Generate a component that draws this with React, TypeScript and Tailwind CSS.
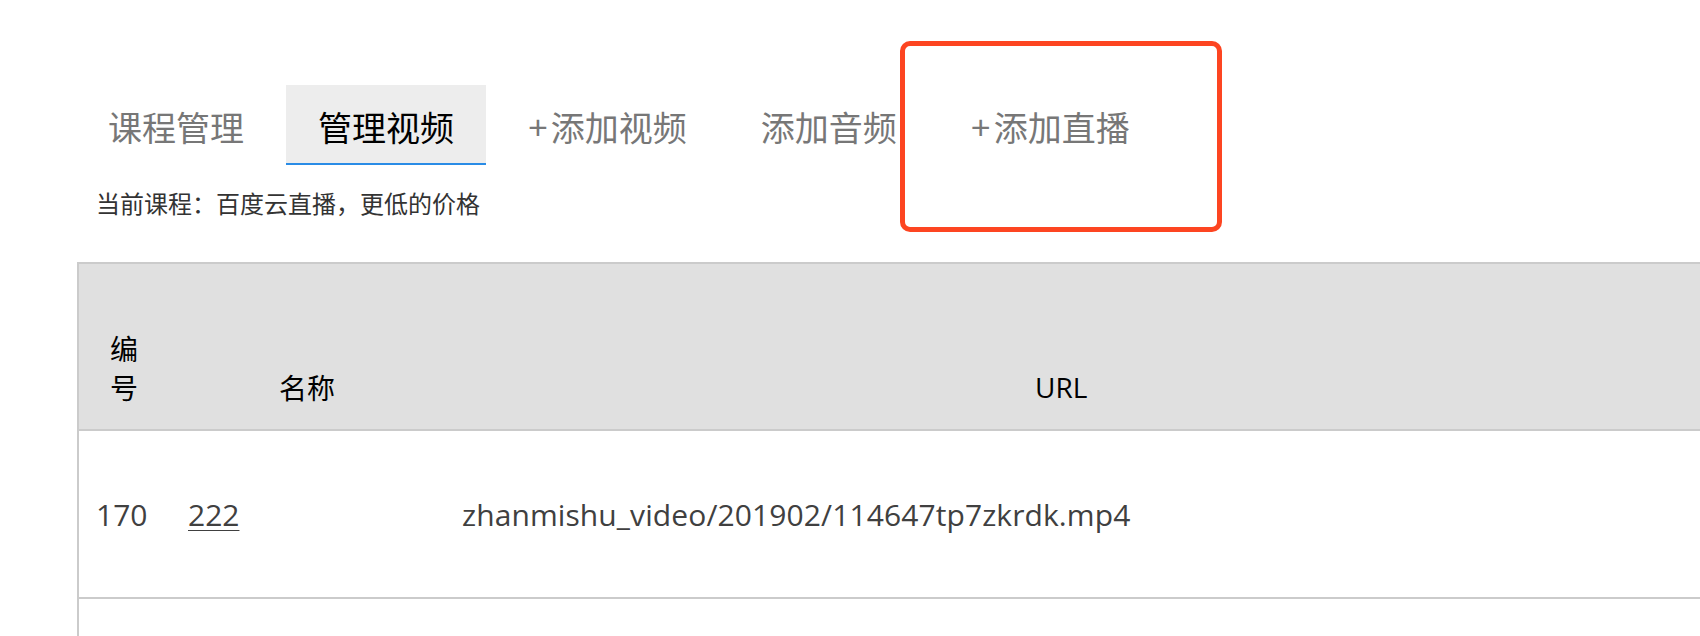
const cjk = "font-['PingFang_SC','Noto_Sans_CJK_SC',sans-serif]";

const tabs = [
  { label: "课程管理", plus: false, active: false },
  { label: "管理视频", plus: false, active: true },
  { label: "添加视频", plus: true, active: false },
  { label: "添加音频", plus: false, active: false },
  { label: "添加直播", plus: true, active: false },
];

export default function App() {
  return (
    <div className="relative h-[636px] w-[1700px] overflow-hidden bg-white">
      {/* tabs */}
      <div className={`flex gap-[10px] pl-[76px] pt-[85px] text-[34px] ${cjk}`}>
        {tabs.map((t) => (
          <div
            key={t.label}
            className={
              t.active
                ? "flex h-[80px] items-center border-b-2 border-[#2a8ce6] bg-[#ededed] px-[32px] pt-[6px] leading-none text-black"
                : "flex h-[80px] items-center border-b-2 border-transparent px-[32px] pt-[6px] leading-none text-[#777]"
            }
          >
            {t.plus && <span className="mr-[3px] font-['Liberation_Sans',sans-serif]">+</span>}
            {t.label}
          </div>
        ))}
      </div>

      <p className={`ml-[96px] mt-[20px] text-[24px] leading-[36px] text-[#333] ${cjk}`}>
        当前课程：百度云直播，更低的价格
      </p>

      {/* table */}
      <div className="ml-[77px] mt-[41px] border-l-2 border-t-2 border-[#cbcbcb]">
        <div className={`flex h-[167px] items-end border-b-2 border-[#cbcbcb] bg-[#e0e0e0] pb-[22px] text-[28px] leading-[39px] text-black ${cjk}`}>
          <div className="w-[200px] pl-[31px]">
            <div className="w-[28px]">编号</div>
          </div>
          <div className="w-[756px]">名称</div>
          <div className="font-['Open_Sans',sans-serif]">URL</div>
        </div>
        <div className="flex h-[168px] items-center border-b-2 border-[#cbcbcb] font-['Open_Sans',sans-serif] text-[30px] text-[#404040]">
          <div className="w-[109px] pl-[17px]">170</div>
          <div className="w-[274px]">
            <span className="underline decoration-1 underline-offset-4">222</span>
          </div>
          <div className="tracking-[0.1px]">zhanmishu_video/201902/114647tp7zkrdk.mp4</div>
        </div>
        <div className="h-[80px]" />
      </div>

      {/* annotation */}
      <div className="absolute left-[900px] top-[41px] h-[191px] w-[322px] rounded-[10px] border-[5px] border-[#fd4521]" />
    </div>
  );
}
